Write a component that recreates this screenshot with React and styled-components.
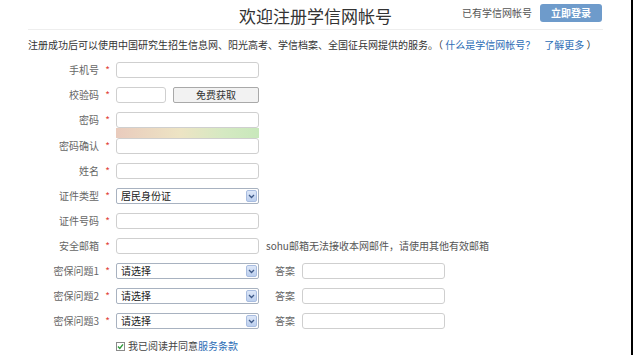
import React from 'react';
import styled, { createGlobalStyle } from 'styled-components';

const Global = createGlobalStyle`
  html, body { margin: 0; padding: 0; background: #fff; }
  body { font-family: "Noto Sans CJK SC", "Noto Sans", sans-serif; }
  * { box-sizing: border-box; }
`;

const Page = styled.div`
  width: 633px;
  height: 355px;
  overflow: hidden;
  background: #fff;
  border-right: 2px solid #000;
  padding: 0 28px;
`;

const Header = styled.header`
  height: 30px;
  border-bottom: 1px solid #eeeeee;
  display: grid;
  grid-template-columns: 1fr auto 1fr;
  align-items: center;
`;

const Title = styled.h1`
  grid-column: 2;
  margin: 0;
  font-size: 17px;
  line-height: 20px;
  font-weight: 400;
  color: #333;
  padding-top: 2px;
`;

const HeaderRight = styled.div`
  grid-column: 3;
  justify-self: end;
  align-self: start;
  margin-top: 4px;
  margin-right: 1px;
  display: flex;
  align-items: center;
  gap: 8px;
`;

const Muted = styled.span`
  font-size: 10px;
  line-height: 14px;
  color: #555;
`;

const LoginButton = styled.button`
  width: 62px;
  height: 18px;
  border: none;
  border-radius: 3px;
  background: #6e9bcb;
  color: #fff;
  font-family: inherit;
  font-size: 10px;
  font-weight: 700;
  padding: 0;
  line-height: 18px;
`;

const Intro = styled.p`
  margin: 8px 0 0;
  font-size: 10px;
  line-height: 14px;
  color: #333;
  white-space: pre;
`;

const Link = styled.a`
  color: #2c6db5;
  text-decoration: none;
`;

const Form = styled.div`
  margin-top: 10px;
  display: flex;
  flex-direction: column;
  gap: 9px;
`;

const Group = styled.div`
  display: flex;
  flex-direction: column;
`;

const Row = styled.div`
  display: flex;
  align-items: flex-start;
`;

const Label = styled.span`
  width: 71px;
  text-align: right;
  font-size: 10px;
  line-height: 16px;
  color: #666;
  white-space: nowrap;
`;

const Star = styled.span`
  width: 17px;
  text-align: center;
  font-size: 10px;
  line-height: 15px;
  color: #e2433b;
`;

const Input = styled.div`
  width: ${p => p.$w || 143}px;
  height: 16px;
  border: 1px solid #cfcfcf;
  border-radius: 3px;
  background: #fff;
  margin-left: ${p => p.$ml || 0}px;
`;

const Field = styled.div`
  display: flex;
  flex-direction: column;
`;

const Strength = styled.div`
  width: 143px;
  height: 10px;
  background: linear-gradient(to right, #e9cbbd 0%, #ede4c4 45%, #d5e9c2 75%, #c8e8bb 100%);
`;

const CodeButton = styled.button`
  width: 86px;
  height: 16px;
  margin-left: 7px;
  border: 1px solid #a9a9a9;
  border-radius: 2px;
  background: #f2f2f2;
  font-family: inherit;
  font-size: 10px;
  line-height: 14px;
  color: #333;
  padding: 0;
`;

const SelectBox = styled.div`
  width: 143px;
  height: 16px;
  border: 1px solid #a8b2c0;
  border-radius: 2px;
  display: flex;
  align-items: center;
  justify-content: space-between;
  padding: 0 1px 0 4px;
  font-size: 10px;
  line-height: 14px;
  color: #222;
`;

const Arrow = styled.span`
  width: 11px;
  height: 12px;
  border: 1px solid #a9bde0;
  border-radius: 2px;
  background: linear-gradient(#dde7f8, #bccfee);
  display: flex;
  align-items: center;
  justify-content: center;
`;

const Hint = styled.span`
  margin-left: 7px;
  font-size: 10px;
  line-height: 16px;
  color: #555;
  white-space: nowrap;
`;

const AnswerLabel = styled.span`
  margin-left: 16px;
  width: 20px;
  font-size: 10px;
  line-height: 16px;
  color: #666;
  white-space: nowrap;
`;

const AgreeRow = styled.label`
  margin-top: 1px;
  padding-left: 88px;
  display: flex;
  align-items: center;
  font-size: 10px;
  line-height: 14px;
  color: #444;
`;

const Check = styled.span`
  width: 9px;
  height: 9px;
  border: 1px solid #8a8a8a;
  background: #fff;
  display: flex;
  align-items: center;
  justify-content: center;
  margin-right: 3px;
`;

const Select = ({ value }) => (
  <SelectBox>
    <span>{value}</span>
    <Arrow>
      <svg width="7" height="5" viewBox="0 0 7 5">
        <path d="M1 1 L3.5 3.5 L6 1" stroke="#3f5a88" strokeWidth="1.3" fill="none" />
      </svg>
    </Arrow>
  </SelectBox>
);

const FieldRow = ({ label, children }) => (
  <Row>
    <Label>{label}</Label>
    <Star>*</Star>
    {children}
  </Row>
);

export default function App() {
  return (
    <Page>
      <Global />
      <Header>
        <Title>欢迎注册学信网帐号</Title>
        <HeaderRight>
          <Muted>已有学信网帐号</Muted>
          <LoginButton>立即登录</LoginButton>
        </HeaderRight>
      </Header>
      <Intro>
        {'注册成功后可以使用中国研究生招生信息网、阳光高考、学信档案、全国征兵网提供的服务。（ '}
        <Link>什么是学信网帐号？</Link>
        {'    '}
        <Link>了解更多</Link>
        {' ）'}
      </Intro>
      <Form>
        <FieldRow label="手机号"><Input /></FieldRow>
        <FieldRow label="校验码">
          <Input $w={50} />
          <CodeButton>免费获取</CodeButton>
        </FieldRow>
        <Group>
          <FieldRow label="密码">
            <Field>
              <Input />
              <Strength />
            </Field>
          </FieldRow>
          <FieldRow label="密码确认"><Input /></FieldRow>
        </Group>
        <FieldRow label="姓名"><Input /></FieldRow>
        <FieldRow label="证件类型"><Select value="居民身份证" /></FieldRow>
        <FieldRow label="证件号码"><Input /></FieldRow>
        <FieldRow label="安全邮箱">
          <Input />
          <Hint>sohu邮箱无法接收本网邮件，请使用其他有效邮箱</Hint>
        </FieldRow>
        {[1, 2, 3].map(n => (
          <FieldRow key={n} label={`密保问题${n}`}>
            <Select value="请选择" />
            <AnswerLabel>答案</AnswerLabel>
            <Input $ml={7} />
          </FieldRow>
        ))}
        <AgreeRow>
          <Check>
            <svg width="7" height="7" viewBox="0 0 7 7">
              <path d="M1 3.6 L2.8 5.4 L6 1.4" stroke="#2f9a3a" strokeWidth="1.4" fill="none" />
            </svg>
          </Check>
          我已阅读并同意<Link>服务条款</Link>
        </AgreeRow>
      </Form>
    </Page>
  );
}
